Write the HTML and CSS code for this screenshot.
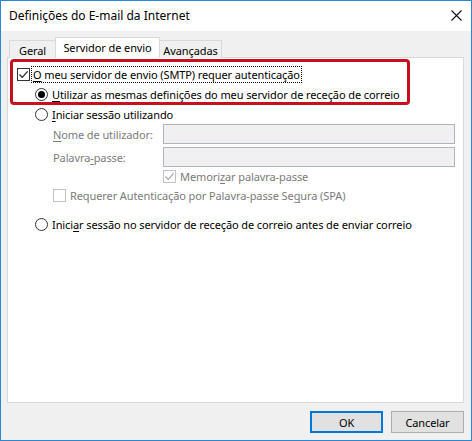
FILE: index.html
```html
<!DOCTYPE html>
<html lang="pt">
<head>
<meta charset="utf-8">
<title>Definições do E-mail da Internet</title>
<link rel="stylesheet" href="styles.css">
</head>
<body>
<div class="window">
  <div class="titlebar">
    <span class="title">Definições do E-mail da Internet</span>
    <svg class="close" width="11" height="11" viewBox="0 0 11 11"><path d="M0.5 0.5 L10.5 10.5 M10.5 0.5 L0.5 10.5" stroke="#111" stroke-width="1.1" fill="none"/></svg>
  </div>
  <div class="client">
    <div class="tabs">
      <div class="tab tab-geral">Geral</div>
      <div class="tab tab-active">Servidor de envio</div>
      <div class="tab tab-adv">Avançadas</div>
    </div>
    <div class="panel">
      <div class="highlight"></div>
      <div class="row row-main">
        <span class="cb"><svg width="11" height="11" viewBox="0 0 11 11"><path d="M1.5 5.5 L4.2 8.3 L9.6 2.4" stroke="#222" stroke-width="1.2" fill="none"/></svg></span>
        <span class="focus"><u>O</u> meu servidor de envio (SMTP) requer autenticação</span>
      </div>
      <div class="row row-radio">
        <span class="radio on"></span>
        <span><u>U</u>tilizar as mesmas definições do meu servidor de receção de correio</span>
      </div>
      <div class="row row-radio">
        <span class="radio"></span>
        <span><u>I</u>niciar sessão utilizando</span>
      </div>
      <div class="row row-field">
        <span class="lbl dis"><u>N</u>ome de utilizador:</span>
        <span class="input"></span>
      </div>
      <div class="row row-field row-field2">
        <span class="lbl dis">Palavra<u>-</u>passe:</span>
        <span class="input"></span>
      </div>
      <div class="row row-remember">
        <span class="cb dis-cb"><svg width="11" height="11" viewBox="0 0 11 11"><path d="M1.5 5.5 L4.2 8.3 L9.6 2.4" stroke="#a6a6a6" stroke-width="1.2" fill="none"/></svg></span>
        <span class="dis">Memori<u>z</u>ar palavra-passe</span>
      </div>
      <div class="row row-spa">
        <span class="cb dis-cb"></span>
        <span class="dis">Requerer Autenticação por Palavra-passe Se<u>g</u>ura (SPA)</span>
      </div>
      <div class="row row-radio row-last">
        <span class="radio"></span>
        <span>Inici<u>a</u>r sessão no servidor de receção de correio antes de enviar correio</span>
      </div>
    </div>
    <div class="buttons">
      <div class="btn btn-default">OK</div>
      <div class="btn">Cancelar</div>
    </div>
  </div>
</div>
</body>
</html>
```
FILE: styles.css
```css
* { box-sizing: border-box; }
html, body { margin: 0; padding: 0; background: #fff; }
body {
  font-family: "Noto Sans", "DejaVu Sans", sans-serif;
  font-size: 11px;
  letter-spacing: -0.1px;
  color: #000;
}
u { text-decoration: underline; text-underline-offset: 2px; text-decoration-thickness: 1px; }

.window {
  width: 472px;
  height: 441px;
  border: 1px solid #2b87d3;
  display: flex;
  flex-direction: column;
  background: #f0f0f0;
}

.titlebar {
  height: 30px;
  background: #fff;
  display: flex;
  align-items: center;
  justify-content: space-between;
  padding: 0 9px 1px 8px;
  flex: none;
}
.title { font-size: 12px; letter-spacing: 0; }
.close { display: block; }

.client {
  flex: 1;
  padding: 6px 7px 0 6px;
  display: flex;
  flex-direction: column;
}

.tabs {
  display: flex;
  align-items: flex-end;
  padding-left: 2px;
  margin-bottom: -1px;
  position: relative;
  z-index: 1;
  height: 21px;
}
.tab {
  height: 18px;
  border: 1px solid #d9d9d9;
  border-bottom: none;
  background: #f0f0f0;
  display: flex;
  align-items: center;
  justify-content: center;
  padding-top: 2px;
}
.tab-geral { width: 46px; border-right: none; }
.tab-active {
  width: 105px;
  height: 21px;
  background: #fff;
  padding-top: 0;
  padding-bottom: 1px;
}
.tab-adv { width: 62px; border-left: none; }

.panel {
  height: 346px;
  background: #fff;
  border: 1px solid #d9d9d9;
  padding: 6px 0 0 9px;
  position: relative;
  display: flex;
  flex-direction: column;
}
.highlight {
  position: absolute;
  left: 2px;
  top: 1px;
  width: 400px;
  height: 46px;
  border: 3px solid #c80f1e;
  border-radius: 4px;
  pointer-events: none;
}

.row {
  display: flex;
  align-items: center;
  height: 20px;
  white-space: nowrap;
  line-height: 1;
}
.row-main { gap: 3px; }
.row-radio { padding-left: 18px; gap: 4px; }
.row-field { padding-left: 36px; height: 20px; }
.row-field2 { margin-top: 3px; }
.row-remember { padding-left: 146px; gap: 4px; height: 19px; }
.row-spa { padding-left: 36px; gap: 4px; height: 19px; }
.row-last { margin-top: 9px; }

.lbl { width: 110px; }
.dis { color: #7b7b7b; }

.cb {
  width: 13px;
  height: 13px;
  border: 1px solid #333;
  background: #fff;
  display: flex;
  align-items: center;
  justify-content: center;
  flex: none;
}
.dis-cb { border-color: #c2c2c2; }

.focus {
  outline: 1px dotted #000;
  outline-offset: 0;
  padding: 2px 1px 2px 0;
  margin-left: -1px;
  padding-left: 1px;
}

.radio {
  width: 13px;
  height: 13px;
  border: 1px solid #333;
  border-radius: 50%;
  background: #fff;
  flex: none;
  display: flex;
  align-items: center;
  justify-content: center;
}
.radio.on::after {
  content: "";
  width: 7px;
  height: 7px;
  border-radius: 50%;
  background: #000;
}

.input {
  width: 292px;
  height: 20px;
  border: 1px solid #adb4bb;
  background: #f0f0f0;
  flex: none;
}

.buttons {
  display: flex;
  justify-content: flex-end;
  gap: 8px;
  margin-top: 8px;
}
.btn {
  width: 73px;
  height: 22px;
  border: 1px solid #adadad;
  background: #e1e1e1;
  display: flex;
  align-items: center;
  justify-content: center;
  line-height: 1;
}
.btn-default { border: 2px solid #0078d7; }
```
